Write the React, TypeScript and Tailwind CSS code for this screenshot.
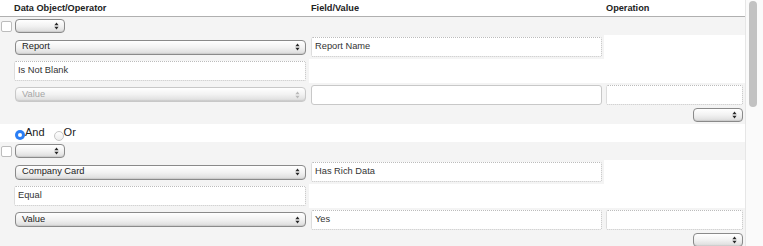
import React from "react";

function Arrows({ faded }: { faded?: boolean }) {
  return (
    <svg
      width="5"
      height="8"
      viewBox="0 0 5 8"
      className={faded ? "fill-[#b8b8b8]" : "fill-[#262626]"}
    >
      <path d="M0.4 3.3 L2.5 0.5 L4.6 3.3 Z" />
      <path d="M0.4 4.7 L2.5 7.5 L4.6 4.7 Z" />
    </svg>
  );
}

function Popup({
  label,
  className,
  disabled,
}: {
  label: string;
  className: string;
  disabled?: boolean;
}) {
  return (
    <div
      className={`flex items-center justify-between rounded-[4px] border bg-linear-to-b from-white via-[#f2f2f2] to-[#dcdcdc] pl-[6px] pr-[5px] shadow-[inset_0_-1px_1px_rgba(0,0,0,0.08)] ${
        disabled
          ? "border-[#c8c8c8] text-[#a6a6a6]"
          : "border-[#8a8a8a] text-[#222]"
      } ${className}`}
    >
      <span className="leading-none">{label}</span>
      <Arrows faded={disabled} />
    </div>
  );
}

function Field({
  value,
  className,
  solid,
}: {
  value: string;
  className: string;
  solid?: boolean;
}) {
  return (
    <div
      className={`flex h-[20px] items-center border bg-white pl-[3px] text-[#333] ${
        solid
          ? "rounded-[3px] border-solid border-[#c8c8c8]"
          : "rounded-[2px] border-dotted border-[#bcbcbc]"
      } ${className}`}
    >
      {value}
    </div>
  );
}

function Checkbox() {
  return (
    <div className="h-[11px] w-[11px] rounded-[2px] border border-[#bcbcbc] bg-white" />
  );
}

type ConditionProps = {
  object: string;
  field: string;
  operator: string;
  valueText: string;
  valueDisabled?: boolean;
  valueSolid?: boolean;
};

function Condition({
  object,
  field,
  operator,
  valueText,
  valueDisabled,
  valueSolid,
}: ConditionProps) {
  return (
    <div className="grid grid-cols-[14px_295px_295px_141px] grid-rows-[18px_24px_24px_23px_18px] bg-[#f4f4f4]">
      {/* row: checkbox + connector select */}
      <div className="flex items-center pl-[1px]">
        <Checkbox />
      </div>
      <div className="col-span-3 flex items-center pl-[1px]">
        <Popup label="" className="h-[14px] w-[50px]" />
      </div>

      {/* row: data object + field */}
      <div />
      <div className="flex items-center pl-[1px]">
        <Popup label={object} className="h-[15px] w-[291px]" />
      </div>
      <div className="flex items-center pl-[2px]">
        <Field value={field} className="w-[291px]" />
      </div>
      <div className="bg-white" />

      {/* row: operator */}
      <div />
      <div className="flex items-center">
        <Field value={operator} className="w-[292px]" />
      </div>
      <div className="col-span-2 bg-white" />

      {/* row: value */}
      <div />
      <div className="flex items-center pl-[1px]">
        <Popup
          label="Value"
          disabled={valueDisabled}
          className="h-[15px] w-[291px]"
        />
      </div>
      <div className="flex items-center pl-[2px]">
        <Field value={valueText} solid={valueSolid} className="w-[291px]" />
      </div>
      <div className="flex items-center pl-[2px]">
        <Field value="" className="w-[137px]" />
      </div>

      {/* row: operation select */}
      <div className="col-span-4 flex items-center justify-end pr-[2px]">
        <Popup label="" className="h-[14px] w-[50px]" />
      </div>
    </div>
  );
}

export default function App() {
  return (
    <div className="flex h-[246px] w-[763px] overflow-hidden bg-white font-['Liberation_Sans',Arial,sans-serif] text-[9.3px] text-[#222]">
      <div className="w-[745px] shrink-0">
        <div className="grid h-[17px] grid-cols-[14px_295px_295px_141px] border-b border-[#b0b0b0] font-bold text-[9.2px] leading-[16px]">
          <div />
          <div>Data Object/Operator</div>
          <div className="pl-[2px]">Field/Value</div>
          <div className="pl-[2px]">Operation</div>
        </div>

        <Condition
          object="Report"
          field="Report Name"
          operator="Is Not Blank"
          valueText=""
          valueDisabled
          valueSolid
        />

        <div className="flex h-[18px] items-start pl-[15px] text-[11px] leading-[11px]">
          <div className="mt-[6px] flex h-[10px] w-[10px] items-center justify-center rounded-full bg-[#2a7ef5]">
            <div className="h-[4px] w-[4px] rounded-full bg-white" />
          </div>
          <span className="mt-[3px]">And</span>
          <div className="ml-[9px] mt-[7px] h-[10px] w-[10px] rounded-full border border-[#c6c6c6] bg-linear-to-b from-white to-[#ededed]" />
          <span className="mt-[3px]">Or</span>
        </div>

        <Condition
          object="Company Card"
          field="Has Rich Data"
          operator="Equal"
          valueText="Yes"
        />
      </div>

      <div className="flex w-[18px] shrink-0 border-l border-[#e6e6e6] bg-[#fafafa] pl-[3px] pt-[1px]">
        <div className="h-[106px] w-[8px] rounded-full bg-[#c2c2c2]" />
      </div>
    </div>
  );
}
